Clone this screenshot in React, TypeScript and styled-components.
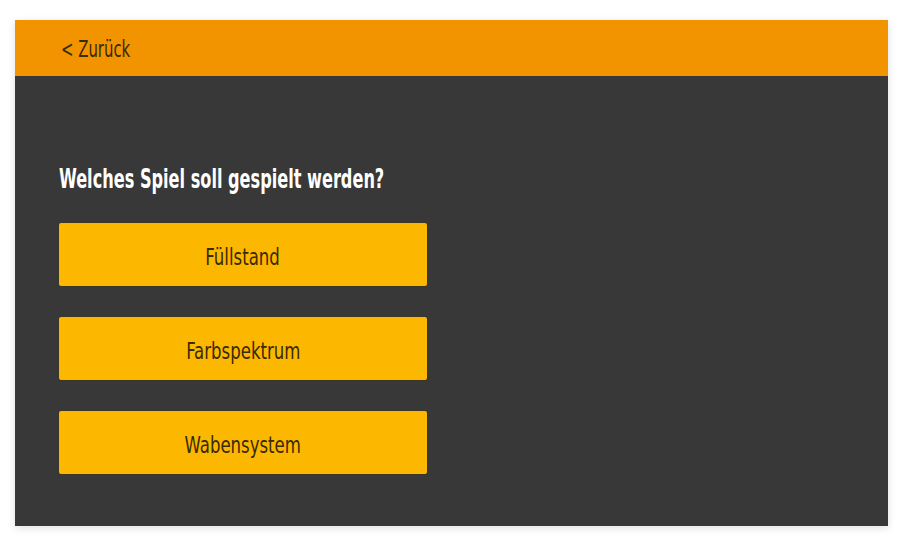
import React, { FC } from "react";
import styled, { createGlobalStyle } from "styled-components";

const GlobalStyle = createGlobalStyle`
  html, body {
    margin: 0;
    padding: 0;
    background: #ffffff;
  }
  body {
    font-family: "DejaVu Sans Condensed", "Liberation Sans", sans-serif;
  }
`;

const Page = styled.div`
  width: 903px;
  height: 546px;
  padding: 20px 15px;
  box-sizing: border-box;
`;

const Card = styled.div`
  width: 873px;
  height: 506px;
  display: flex;
  flex-direction: column;
  background: #383838;
  box-shadow: 0 2px 8px rgba(0, 0, 0, 0.12);
`;

const Header = styled.div`
  height: 56px;
  flex-shrink: 0;
  background: #f29400;
  display: flex;
  align-items: center;
  padding-left: 46px;
`;

// the reference uses a tall, narrow display face; squeeze the condensed sans to fit
const Narrow = styled.span<{ $scale: number; $origin?: string }>`
  display: inline-block;
  white-space: nowrap;
  transform: scaleX(${(p) => p.$scale});
  transform-origin: ${(p) => p.$origin || "center"};
`;

const BackLink = styled.a`
  color: #3a2a05;
  font-size: 23px;
  text-decoration: none;
  cursor: pointer;
  margin-top: 2px;
`;

const Body = styled.div`
  padding: 86px 44px 0 44px;
  display: flex;
  flex-direction: column;
`;

const Title = styled.h1`
  margin: 0 0 27px 0;
  color: #ffffff;
  font-size: 26px;
  font-weight: bold;
  line-height: 34px;
`;

const ButtonList = styled.div`
  display: flex;
  flex-direction: column;
  gap: 31px;
`;

const GameButton = styled.button`
  width: 368px;
  height: 63px;
  padding: 4px 0 0 0;
  border: none;
  border-radius: 2px;
  background: #fcb800;
  box-shadow: 0 0 0 1px rgba(70, 50, 0, 0.35);
  color: #3a2a05;
  font-family: inherit;
  font-size: 23px;
  cursor: pointer;
`;

const games = ["Füllstand", "Farbspektrum", "Wabensystem"];

const App: FC = () => {
  return (
    <>
      <GlobalStyle />
      <Page>
        <Card>
          <Header>
            <BackLink>
              <Narrow $scale={0.72} $origin="left">
                &lt; Zurück
              </Narrow>
            </BackLink>
          </Header>
          <Body>
            <Title>
              <Narrow $scale={0.69} $origin="left">
                Welches Spiel soll gespielt werden?
              </Narrow>
            </Title>
            <ButtonList>
              {games.map((game) => (
                <GameButton key={game}>
                  <Narrow $scale={0.8}>{game}</Narrow>
                </GameButton>
              ))}
            </ButtonList>
          </Body>
        </Card>
      </Page>
    </>
  );
};

export default App;
